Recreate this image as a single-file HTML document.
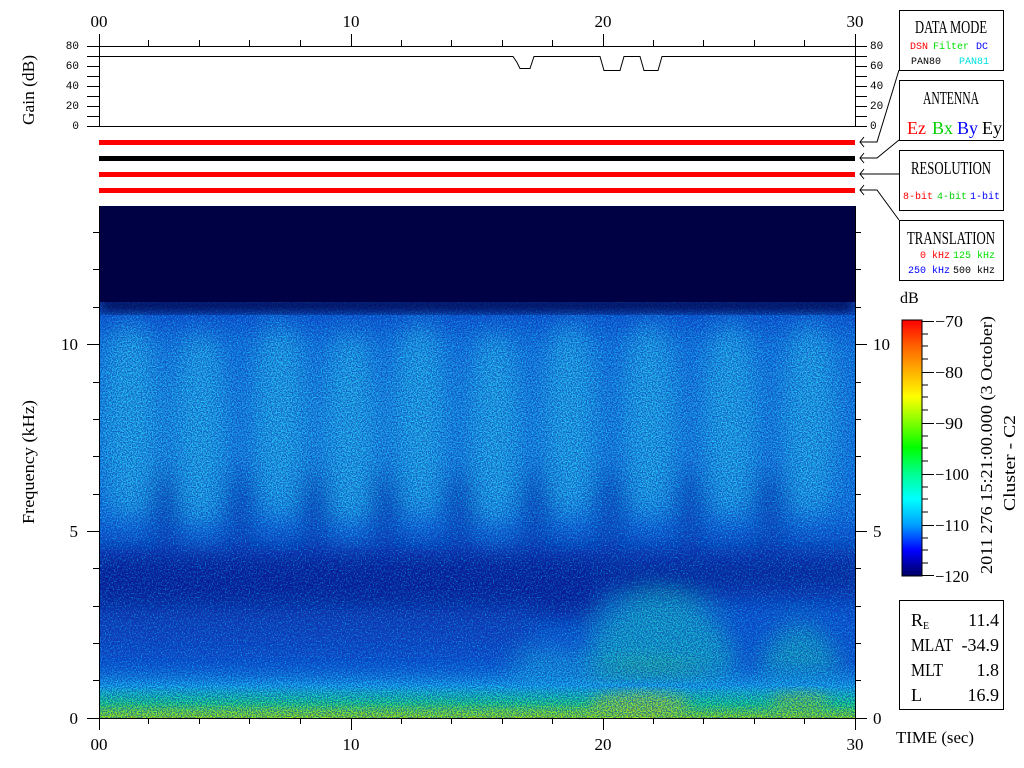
<!DOCTYPE html>
<html><head><meta charset="utf-8"><style>
html,body{margin:0;padding:0;background:#fff;}
svg{display:block;}
text{font-family:"Liberation Serif",serif;}
.m text{font-family:"Liberation Mono",monospace;}
</style></head><body>
<svg width="1024" height="768" viewBox="0 0 1024 768" xmlns="http://www.w3.org/2000/svg">
<defs>
<filter id="b12" x="-20%" y="-20%" width="140%" height="140%"><feGaussianBlur stdDeviation="12"/></filter>
<filter id="b6" x="-20%" y="-20%" width="140%" height="140%"><feGaussianBlur stdDeviation="6"/></filter>
<filter id="nz" x="0" y="0" width="100%" height="100%">
<feTurbulence type="fractalNoise" baseFrequency="0.8" numOctaves="1" seed="3"/>
<feColorMatrix type="matrix" values="0 0 0 0 0  0 0 0 0 0.03  0 0 0 0 0.4  0 0 0 -5 3.0"/>
</filter>
<filter id="nc" x="0" y="0" width="100%" height="100%">
<feTurbulence type="fractalNoise" baseFrequency="0.75" numOctaves="1" seed="11"/>
<feColorMatrix type="matrix" values="0 0 0 0 0  0 0 0 0 0.9  0 0 0 0 1  0 0 0 5 -2.5"/>
</filter>
<clipPath id="sp"><rect x="99" y="206" width="756" height="512"/></clipPath>
<linearGradient id="cb" x1="0" y1="1" x2="0" y2="0">
<stop offset="0" stop-color="#000060"/><stop offset="0.1" stop-color="#0000ff"/>
<stop offset="0.2" stop-color="#00a0ff"/><stop offset="0.3" stop-color="#00ffff"/>
<stop offset="0.4" stop-color="#00ff90"/><stop offset="0.5" stop-color="#00ff00"/>
<stop offset="0.6" stop-color="#80ff00"/><stop offset="0.7" stop-color="#ffff00"/>
<stop offset="0.8" stop-color="#ffb000"/><stop offset="0.9" stop-color="#ff6000"/>
<stop offset="1" stop-color="#ff0000"/>
</linearGradient>
<linearGradient id="bot" x1="0" y1="0" x2="0" y2="1">
<stop offset="0" stop-color="#1870e0" stop-opacity="0"/><stop offset="0.45" stop-color="#20b0f0"/>
<stop offset="0.75" stop-color="#20e080"/><stop offset="1" stop-color="#a0f000"/>
</linearGradient>
</defs>

<g font-size="17" text-anchor="middle">
<text x="99" y="27">00</text><text x="351" y="27">10</text><text x="603" y="27">20</text><text x="855" y="27">30</text>
</g>
<g stroke="#000" stroke-width="1" fill="none">
<line x1="87" y1="46.5" x2="867" y2="46.5"/>
<line x1="87" y1="126.5" x2="867" y2="126.5"/>
<line x1="99.5" y1="34" x2="99.5" y2="126"/>
<line x1="855.5" y1="34" x2="855.5" y2="126"/>
<line x1="351.5" y1="34" x2="351.5" y2="46"/><line x1="603.5" y1="34" x2="603.5" y2="46"/>
<path d="M148.5 40v6M199.5 40v6M249.5 40v6M300.5 40v6M401.5 40v6M451.5 40v6M502.5 40v6M552.5 40v6M653.5 40v6M703.5 40v6M754.5 40v6M804.5 40v6"/>
<path d="M87 56.5h12M87 66.5h12M87 76.5h12M87 86.5h12M87 96.5h12M87 106.5h12M87 116.5h12"/>
<path d="M855 56.5h12M855 66.5h12M855 76.5h12M855 86.5h12M855 96.5h12M855 106.5h12M855 116.5h12"/>
<path d="M99 56.5H513l4 6 3 6h10l4-12H600l4 14h16l4-14h16l4 14h14l4-14H855"/>
</g>
<g class="m" font-size="11" text-anchor="end">
<text x="79" y="49">80</text><text x="79" y="69">60</text><text x="79" y="89">40</text><text x="79" y="109">20</text><text x="79" y="129">0</text>
</g>
<g class="m" font-size="11">
<text x="870" y="49">80</text><text x="870" y="69">60</text><text x="870" y="89">40</text><text x="870" y="109">20</text><text x="870" y="129">0</text>
</g>
<text transform="translate(34 90) rotate(-90)" font-size="17" text-anchor="middle" textLength="70" lengthAdjust="spacingAndGlyphs">Gain (dB)</text>

<rect x="99" y="140" width="756" height="5" fill="#ff0000"/>
<rect x="99" y="156" width="756" height="5" fill="#000"/>
<rect x="99" y="172" width="756" height="5" fill="#ff0000"/>
<rect x="99" y="188" width="756" height="5" fill="#ff0000"/>

<g clip-path="url(#sp)">
<rect x="99" y="206" width="756" height="512" fill="#1458d8"/>
<g filter="url(#b12)">
<rect x="80" y="330" width="800" height="195" fill="#1c80e6"/>
<g fill="#30bcf0" opacity="0.85">
<ellipse cx="130" cy="420" rx="28" ry="100"/><ellipse cx="200" cy="430" rx="26" ry="100"/>
<ellipse cx="280" cy="420" rx="26" ry="100"/><ellipse cx="350" cy="430" rx="26" ry="100"/>
<ellipse cx="420" cy="420" rx="26" ry="100"/><ellipse cx="495" cy="430" rx="26" ry="100"/>
<ellipse cx="570" cy="420" rx="26" ry="100"/><ellipse cx="650" cy="420" rx="26" ry="100"/>
<ellipse cx="730" cy="420" rx="26" ry="100"/><ellipse cx="810" cy="420" rx="26" ry="100"/>
</g>
<g fill="#0c2aa8" opacity="0.8">
<ellipse cx="165" cy="510" rx="12" ry="40"/><ellipse cx="240" cy="510" rx="12" ry="40"/>
<ellipse cx="315" cy="510" rx="12" ry="40"/><ellipse cx="385" cy="510" rx="12" ry="40"/>
<ellipse cx="460" cy="510" rx="12" ry="40"/><ellipse cx="535" cy="510" rx="12" ry="40"/>
<ellipse cx="610" cy="510" rx="12" ry="40"/><ellipse cx="690" cy="510" rx="12" ry="40"/>
<ellipse cx="770" cy="510" rx="12" ry="40"/>
</g>
<rect x="80" y="550" width="520" height="68" fill="#0a1890"/>
<rect x="600" y="550" width="270" height="48" fill="#0c2098"/>
<rect x="80" y="610" width="450" height="40" fill="#1240c0"/>
<ellipse cx="660" cy="670" rx="75" ry="75" fill="#20b8c8" opacity="0.85"/>
<ellipse cx="650" cy="695" rx="70" ry="30" fill="#40e040" opacity="0.8"/>
<ellipse cx="800" cy="680" rx="40" ry="55" fill="#20b8c0" opacity="0.8"/>
<ellipse cx="550" cy="680" rx="40" ry="30" fill="#20a0e0"/>
</g>
<rect x="99" y="660" width="756" height="58" fill="url(#bot)"/>
<g filter="url(#b6)">
<ellipse cx="640" cy="704" rx="50" ry="12" fill="#e0e000" opacity="0.6"/>
<ellipse cx="800" cy="702" rx="30" ry="10" fill="#c0e000" opacity="0.5"/>
<rect x="99" y="710" width="500" height="8" fill="#c0f000" opacity="0.6"/>
</g>
<rect x="99" y="206" width="756" height="512" filter="url(#nc)" opacity="0.5"/>
<rect x="99" y="206" width="756" height="512" filter="url(#nz)" opacity="0.6"/>
<rect x="99" y="206" width="756" height="96" fill="#000044"/>
<rect x="99" y="298" width="756" height="14" fill="#000044" filter="url(#b6)" opacity="0.9"/>
</g>

<g stroke="#000" fill="none">
<line x1="99.5" y1="206" x2="99.5" y2="730"/>
<line x1="855.5" y1="206" x2="855.5" y2="730"/>
<line x1="87" y1="718.5" x2="867" y2="718.5"/>
<path d="M87 531.5h12M87 344.5h12M855 531.5h12M855 344.5h12"/>
<path d="M93 680.5h6M93 643.5h6M93 606.5h6M93 568.5h6M93 494.5h6M93 456.5h6M93 419.5h6M93 382.5h6M93 307.5h6M93 269.5h6M93 232.5h6"/>
<path d="M855 680.5h6M855 643.5h6M855 606.5h6M855 568.5h6M855 494.5h6M855 456.5h6M855 419.5h6M855 382.5h6M855 307.5h6M855 269.5h6M855 232.5h6"/>
<path d="M351.5 718v12M603.5 718v12"/>
<path d="M148.5 718v6M199.5 718v6M249.5 718v6M300.5 718v6M401.5 718v6M451.5 718v6M502.5 718v6M552.5 718v6M653.5 718v6M703.5 718v6M754.5 718v6M804.5 718v6"/>
</g>
<g font-size="17" text-anchor="end">
<text x="78" y="724">0</text><text x="78" y="537">5</text><text x="78" y="350">10</text>
</g>
<g font-size="17">
<text x="873" y="724">0</text><text x="873" y="537">5</text><text x="873" y="350">10</text>
</g>
<g font-size="17" text-anchor="middle">
<text x="99" y="750">00</text><text x="351" y="750">10</text><text x="603" y="750">20</text><text x="855" y="750">30</text>
</g>
<text transform="translate(34 462) rotate(-90)" font-size="17" text-anchor="middle" textLength="124" lengthAdjust="spacingAndGlyphs">Frequency (kHz)</text>
<text x="896" y="743" font-size="17" textLength="78" lengthAdjust="spacingAndGlyphs">TIME (sec)</text>

<g stroke="#000" fill="#fff">
<rect x="899.5" y="10.5" width="104" height="60"/>
<rect x="899.5" y="80.5" width="104" height="60"/>
<rect x="899.5" y="150.5" width="104" height="60"/>
<rect x="899.5" y="220.5" width="104" height="60"/>
<rect x="899.5" y="600.5" width="104" height="109"/>
</g>
<g stroke="#000" fill="none">
<path d="M899 70L877 142H860M864 137l-4 5 4 5"/>
<path d="M899 140L877 158H860M864 153l-4 5 4 5"/>
<path d="M899 174H860M864 169l-4 5 4 5"/>
<path d="M899 220L877 190H860M864 185l-4 5 4 5"/>
</g>
<g font-size="18" text-anchor="middle">
<text x="951" y="33" textLength="72" lengthAdjust="spacingAndGlyphs">DATA MODE</text>
<text x="951" y="104" textLength="56" lengthAdjust="spacingAndGlyphs">ANTENNA</text>
<text x="951" y="174" textLength="80" lengthAdjust="spacingAndGlyphs">RESOLUTION</text>
<text x="951" y="244" textLength="88" lengthAdjust="spacingAndGlyphs">TRANSLATION</text>
</g>
<g class="m" font-size="10">
<text x="910" y="49" fill="#ff0000">DSN</text><text x="933" y="49" fill="#00e000">Filter</text><text x="976" y="49" fill="#0000ff">DC</text>
<text x="911" y="64" fill="#000">PAN80</text><text x="959" y="64" fill="#00e0e0">PAN81</text>
<text x="903" y="199" fill="#ff0000" textLength="30" lengthAdjust="spacingAndGlyphs">8-bit</text><text x="937" y="199" fill="#00d000" textLength="30" lengthAdjust="spacingAndGlyphs">4-bit</text><text x="970" y="199" fill="#0000ff" textLength="30" lengthAdjust="spacingAndGlyphs">1-bit</text>
<text x="920" y="258" fill="#ff0000">0 kHz</text><text x="953" y="258" fill="#00e000">125 kHz</text>
<text x="908" y="273" fill="#0000ff">250 kHz</text><text x="953" y="273" fill="#000">500 kHz</text>
</g>
<g font-size="18">
<text x="907" y="134" fill="#ff0000">Ez</text><text x="932" y="134" fill="#00d000">Bx</text><text x="957" y="134" fill="#0000ff">By</text><text x="982" y="134" fill="#000">Ey</text>
</g>

<text x="900" y="303" font-size="16">dB</text>
<rect x="902" y="320" width="20" height="256" fill="url(#cb)" stroke="#000"/>
<g stroke="#000">
<path d="M922 321.5h12M922 372.5h12M922 423.5h12M922 474.5h12M922 525.5h12M922 575.5h12"/>
<path d="M922 334h6M922 346h6M922 359h6M922 385h6M922 397h6M922 410h6M922 436h6M922 448h6M922 461h6M922 487h6M922 499h6M922 512h6M922 538h6M922 550h6M922 563h6"/>
</g>
<g font-size="17">
<text x="935" y="327" textLength="28" lengthAdjust="spacingAndGlyphs">−70</text><text x="935" y="378" textLength="28" lengthAdjust="spacingAndGlyphs">−80</text><text x="935" y="429" textLength="28" lengthAdjust="spacingAndGlyphs">−90</text>
<text x="935" y="480" textLength="34" lengthAdjust="spacingAndGlyphs">−100</text><text x="935" y="531" textLength="34" lengthAdjust="spacingAndGlyphs">−110</text><text x="935" y="582" textLength="34" lengthAdjust="spacingAndGlyphs">−120</text>
</g>
<text transform="translate(992 574) rotate(-90)" font-size="17" textLength="258" lengthAdjust="spacingAndGlyphs">2011 276 15:21:00.000 (3 October)</text>
<text transform="translate(1015 511) rotate(-90)" font-size="17" textLength="96" lengthAdjust="spacingAndGlyphs">Cluster - C2</text>

<g font-size="18">
<text x="911" y="626">R<tspan font-size="10" dy="3">E</tspan></text>
<text x="911" y="651" textLength="42" lengthAdjust="spacingAndGlyphs">MLAT</text><text x="911" y="676" textLength="32" lengthAdjust="spacingAndGlyphs">MLT</text><text x="911" y="701">L</text>
</g>
<g font-size="18" text-anchor="end">
<text x="999" y="626">11.4</text><text x="999" y="651">-34.9</text><text x="999" y="676">1.8</text><text x="999" y="701">16.9</text>
</g>
</svg>
</body></html>
